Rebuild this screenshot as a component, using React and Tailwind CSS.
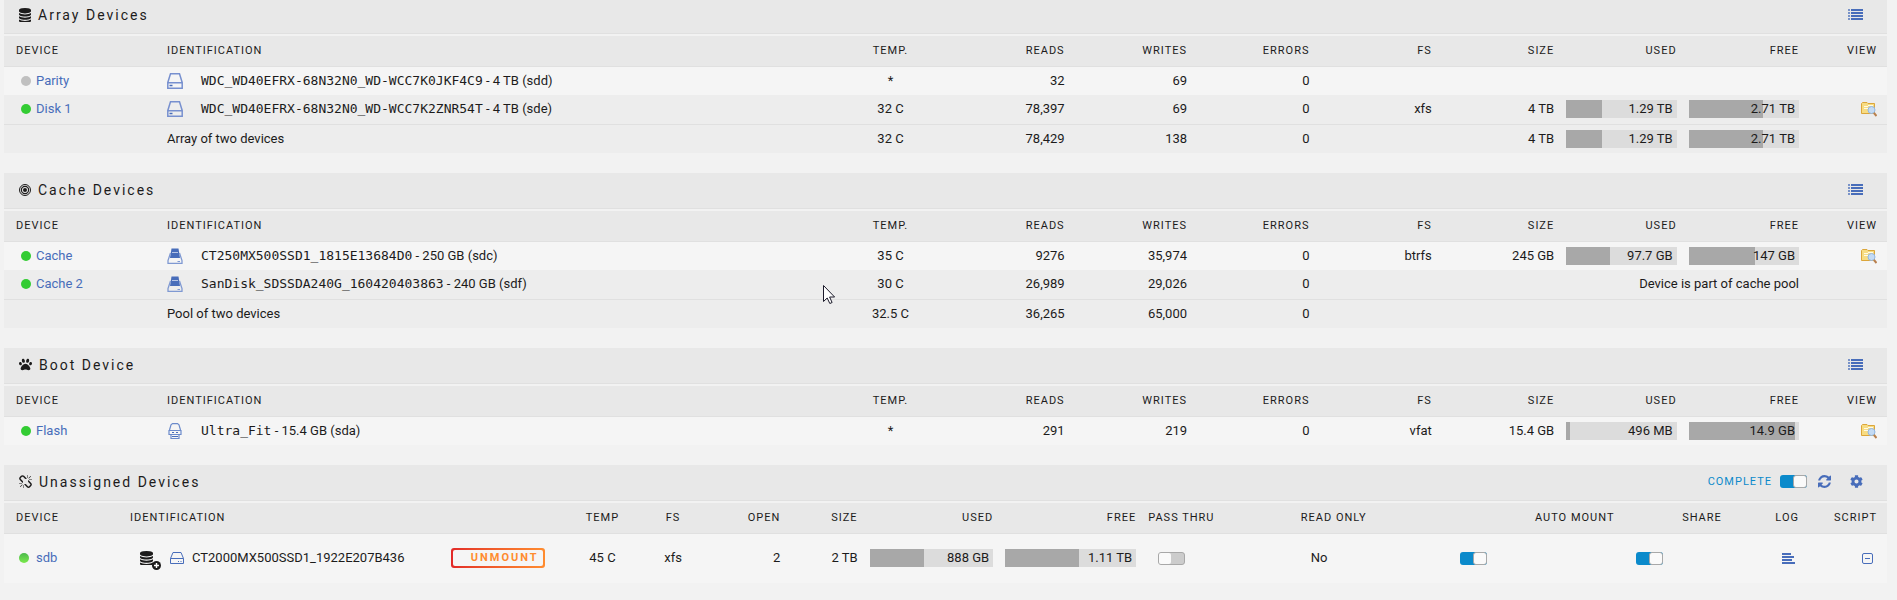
import { FaPaw, FaCog } from "react-icons/fa";

const DATABASE_PATH =
  "M768 768q237 0 443-43t325-127v170q0 69-103 128t-280 93.5-385 34.5-385-34.5-280-93.5-103-128v-170q119 84 325 127t443 43zm0 768q237 0 443-43t325-127v170q0 69-103 128t-280 93.5-385 34.5-385-34.5-280-93.5-103-128v-170q119 84 325 127t443 43zm0-384q237 0 443-43t325-127v170q0 69-103 128t-280 93.5-385 34.5-385-34.5-280-93.5-103-128v-170q119 84 325 127t443 43zm0-1152q208 0 385 34.5t280 93.5 103 128v128q0 69-103 128t-280 93.5-385 34.5-385-34.5-280-93.5-103-128v-128q0-69 103-128t280-93.5 385-34.5z";

const REFRESH_PATH =
  "M1511 928q0 5-1 7-64 268-268 434.5t-478 166.5q-146 0-282.5-55t-243.5-157l-129 129q-19 19-45 19t-45-19-19-45v-448q0-26 19-45t45-19h448q26 0 45 19t19 45-19 45l-137 137q71 66 161 102t187 36q134 0 250-65t186-179q11-17 53-117 8-23 30-23h192q13 0 22.5 9.5t9.5 22.5zm25-800v448q0 26-19 45t-45 19h-448q-26 0-45-19t-19-45 19-45l138-138q-148-137-349-137-134 0-250 65t-186 179q-11 17-53 117-8 23-30 23h-199q-13 0-22.5-9.5t-9.5-22.5v-7q65-268 270-434.5t480-166.5q146 0 284 55.5t245 156.5l130-129q19-19 45-19t45 19 19 45z";

const UNLINK_PATH =
  "M439 1271l-256 256q-11 9-23 9t-23-9q-9-10-9-23t9-23l256-256q10-9 23-9t23 9q9 10 9 23t-9 23zm169 41v320q0 14-9 23t-23 9-23-9-9-23v-320q0-14 9-23t23-9 23 9 9 23zm-224-224q0 14-9 23t-23 9h-320q-14 0-23-9t-9-23 9-23 23-9h320q14 0 23 9t9 23zm1264 128q0 120-85 203l-147 146q-83 83-203 83-121 0-204-85l-334-335q-21-21-42-56l239-18 273 274q28 28 68 28.5t68-27.5l147-146q28-28 28-67 0-40-28-68l-274-275 18-239q35 21 56 42l336 336q84 86 84 204zm-617-724l-239 18-273-274q-28-28-68-28-39 0-68 27l-147 146q-28 28-28 67 0 40 28 68l274 274-18 240q-35-21-56-42l-336-336q-84-86-84-204 0-120 85-203l147-146q83-83 203-83 121 0 204 85l334 335q21 21 42 56zm633 84q0 14-9 23t-23 9h-320q-14 0-23-9t-9-23 9-23 23-9h320q14 0 23 9t9 23zm-544-544v320q0 14-9 23t-23 9-23-9-9-23v-320q0-14 9-23t23-9 23 9 9 23zm407 151l-256 256q-11 9-23 9t-23-9q-9-10-9-23t9-23l256-256q10-9 23-9t23 9q9 10 9 23t-9 23z";

function DatabaseIcon({ className }) {
  return (
    <svg viewBox="0 0 1536 1664" preserveAspectRatio="none" fill="currentColor" className={className}>
      <path d={DATABASE_PATH} />
    </svg>
  );
}

function RefreshIcon() {
  return (
    <svg viewBox="0 0 1536 1536" fill="currentColor" className="size-[13px]">
      <path d={REFRESH_PATH} />
    </svg>
  );
}

function UnlinkIcon() {
  return (
    <svg viewBox="0 0 1664 1664" fill="currentColor" className="size-[13px]">
      <path d={UNLINK_PATH} />
    </svg>
  );
}

function TargetIcon() {
  return (
    <svg viewBox="0 0 12 12" fill="none" stroke="currentColor" className="size-3">
      <circle cx="6" cy="6" r="5.5" />
      <circle cx="6" cy="6" r="3.6" strokeWidth="1.2" />
      <circle cx="6" cy="6" r="2" fill="currentColor" stroke="none" />
    </svg>
  );
}

function ListIcon() {
  return (
    <svg viewBox="0 0 15 12" fill="currentColor" className="h-3 w-[15px]">
      {[0, 3, 6, 9].map((y) => (
        <g key={y}>
          <rect x="0" y={y} width="2" height="2" opacity="0.7" />
          <rect x="3" y={y} width="12" height="2" />
        </g>
      ))}
    </svg>
  );
}

function LogIcon() {
  return (
    <svg viewBox="0 0 13 11" fill="currentColor" className="h-[11px] w-[13px]">
      <rect x="0" y="0" width="9" height="2" />
      <rect x="0" y="3" width="12" height="2" />
      <rect x="0" y="6" width="10" height="2" />
      <rect x="0" y="9" width="13" height="2" />
    </svg>
  );
}

function MinusSquareIcon() {
  return (
    <svg viewBox="0 0 11 11" fill="none" stroke="currentColor" className="size-[11px]">
      <rect x="0.5" y="0.5" width="10" height="10" rx="1.5" />
      <path d="M3 5.5h5" />
    </svg>
  );
}

function DiskIcon() {
  return (
    <svg viewBox="0 0 16 16" fill="none" stroke="#7790cf" strokeWidth="1.5" className="size-4">
      <path d="M.8 9.500 3.500 .8h9L15.200 9.500M.8 9.800h14.400v5.400H.8z" />
      <path d="M2.500 12.500h3" stroke="#486dba" />
    </svg>
  );
}

function SsdIcon() {
  return (
    <svg viewBox="0 0 16 16" fill="none" className="size-4">
      <path d="M4.500 .5h7l1.500 9.500H3z" fill="#486dba" />
      <path d="M3.500 5 1 12.500v2.800h14v-2.800L12.500 5" stroke="#7f99d2" strokeWidth="1.3" />
      <path d="M5 4.500h6" stroke="#b6c5e6" />
      <path d="M10.500 13.500h2.500" stroke="#7f99d2" />
    </svg>
  );
}

function FlashIcon() {
  return (
    <svg viewBox="0 0 16 16" fill="none" stroke="#6b8acb" strokeWidth="1.2" className="size-4">
      <path d="M2.500 7 4 1.800 5.500 .6h5L12 1.800 13.500 7" />
      <path d="M2 7.500h12v4H2zM4 11.500h8v4H4z" />
      <path d="M5 9.500h2M9 9.500h2M5 13.500h6" stroke="#486dba" />
    </svg>
  );
}

function BrowseIcon() {
  return (
    <svg viewBox="0 0 16 16" fill="none" className="size-4">
      <path d="M.5 2.500 1.500 1.500H6L7 2.500h6.500v10H.5z" fill="#f7dc83" stroke="#dca63a" />
      <path d="M3 5.500h4M7 4.500h5M3 7.500h8" stroke="#fffbe6" />
      <circle cx="10.500" cy="9" r="3.500" fill="#c4dbf4" stroke="#93b7e3" />
      <path d="m13 12 2.500 3" stroke="#b9804e" strokeWidth="2" />
    </svg>
  );
}

const DEVICE_ICONS = { disk: DiskIcon, ssd: SsdIcon, flash: FlashIcon };

function Bar({ percent, children }) {
  return (
    <div className="relative h-[18px] bg-[#dcdcdc]">
      <div className="h-full bg-[#a8a8a8]" style={{ width: `${percent}%` }} />
      <span className="absolute inset-y-0 right-1 leading-[18px]">{children}</span>
    </div>
  );
}

function Switch({ label, on }) {
  return (
    <button
      type="button"
      role="switch"
      aria-checked={Boolean(on)}
      aria-label={label}
      className={
        on
          ? "flex h-[13px] w-[27px] justify-end rounded-[3px] bg-[#0b8acb]"
          : "flex h-[13px] w-[27px] rounded-[3px] border border-[#a8a8a8] bg-[#cccccc]"
      }
    >
      <span
        className={
          on
            ? "h-full w-3.5 rounded-[3px] border border-[#a8a8a8] bg-[#fafafa]"
            : "h-full w-3 rounded-[2px] bg-[#fafafa]"
        }
      />
    </button>
  );
}

function TitleBar({ icon, title, children }) {
  return (
    <div className="mb-0.5 flex h-9 items-center border-b border-[#e0e0e0] bg-[#e8e8e8] pr-6 pb-0.5 pl-[15px]">
      <span className="mr-[7px]">{icon}</span>
      <h2 className="grow text-sm tracking-[2px]">{title}</h2>
      <div className="flex items-center text-[#486dba]">{children}</div>
    </div>
  );
}

const HEAD_ROW =
  "h-[30px] border-b border-[#e0e0e0] bg-[#e8e8e8] text-[11px] tracking-[1px] uppercase *:font-normal";

function DeviceTable({ icon, title, rows, summary }) {
  return (
    <section className="mb-5">
      <TitleBar icon={icon} title={title}>
        <button type="button" aria-label={`${title} list`}>
          <ListIcon />
        </button>
      </TitleBar>
      <table className="w-full table-fixed text-right">
        <colgroup>
          <col className="w-[163px]" />
          <col />
          <col className="w-[5.5%]" />
          <col className="w-[6.5%]" />
          <col className="w-[6.5%]" />
          <col className="w-[6.5%]" />
          <col className="w-[6.5%]" />
          <col className="w-[6.5%]" />
          <col className="w-[6.5%]" />
          <col className="w-[6.5%]" />
          <col className="w-22" />
        </colgroup>
        <thead>
          <tr className={HEAD_ROW}>
            <th className="pl-3 text-left">Device</th>
            <th className="text-left">Identification</th>
            <th className="text-center">Temp.</th>
            <th>Reads</th>
            <th>Writes</th>
            <th>Errors</th>
            <th>FS</th>
            <th>Size</th>
            <th>Used</th>
            <th>Free</th>
            <th className="pr-2.5">View</th>
          </tr>
        </thead>
        <tbody>
          {rows.map((row) => {
            const Icon = DEVICE_ICONS[row.type];
            return (
              <tr key={row.name} className="h-[29px] odd:bg-[#f5f5f5] even:bg-[#ededed]">
                <td className="pl-[17px]">
                  <span className="flex items-center gap-[5px]">
                    <span className={row.idle ? "size-2.5 rounded-full bg-[#c0c0c0]" : "size-2.5 rounded-full bg-[#33cc33]"} />
                    <a href="#" className="text-[#486dba]">{row.name}</a>
                  </span>
                </td>
                <td>
                  <span className="flex items-center gap-[18px]">
                    <Icon />
                    <span>
                      <span className="font-['DejaVu_Sans_Mono',monospace]">{row.id}</span>
                      {` - ${row.capacity} (${row.dev})`}
                    </span>
                  </span>
                </td>
                <td className="text-center">{row.temp}</td>
                <td>{row.reads}</td>
                <td>{row.writes}</td>
                <td>0</td>
                {row.note ? (
                  <td colSpan={4}>{row.note}</td>
                ) : (
                  <>
                    <td>{row.fs}</td>
                    <td>{row.size}</td>
                    <td className="pl-3">{row.used && <Bar percent={row.usedPercent}>{row.used}</Bar>}</td>
                    <td className="pl-3">{row.free && <Bar percent={row.freePercent}>{row.free}</Bar>}</td>
                  </>
                )}
                <td className="pr-2.5">
                  {row.fs && (
                    <a href="#" aria-label={`Browse ${row.name}`} className="flex justify-end">
                      <BrowseIcon />
                    </a>
                  )}
                </td>
              </tr>
            );
          })}
        </tbody>
        {summary && (
          <tfoot>
            <tr className="h-[29px] border-t border-[#e0e0e0] bg-[#ededed]">
              <td />
              <td className="text-left">{summary.label}</td>
              <td className="text-center">{summary.temp}</td>
              <td>{summary.reads}</td>
              <td>{summary.writes}</td>
              <td>0</td>
              <td />
              <td>{summary.size}</td>
              <td className="pl-3">{summary.used && <Bar percent={32}>{summary.used}</Bar>}</td>
              <td className="pl-3">{summary.free && <Bar percent={67}>{summary.free}</Bar>}</td>
              <td />
            </tr>
          </tfoot>
        )}
      </table>
    </section>
  );
}

function UnassignedDevices() {
  return (
    <section>
      <TitleBar icon={<UnlinkIcon />} title="Unassigned Devices">
        <span className="mr-2 text-[11px] tracking-[1px] text-[#0b8acb]">COMPLETE</span>
        <Switch label="Complete" on />
        <button type="button" aria-label="Refresh" className="ml-[11px]">
          <RefreshIcon />
        </button>
        <button type="button" aria-label="Settings" className="ml-[19px]">
          <FaCog className="size-[13px]" />
        </button>
      </TitleBar>
      <table className="w-full table-fixed text-right">
        <colgroup>
          <col className="w-[126px]" />
          <col />
          <col className="w-[5.5%]" />
          <col className="w-[2%]" />
          <col className="w-[4.7%]" />
          <col className="w-[4.1%]" />
          <col className="w-[7.2%]" />
          <col className="w-[7.6%]" />
          <col className="w-[8.1%]" />
          <col className="w-[9.1%]" />
          <col className="w-[8.2%]" />
          <col className="w-[5.7%]" />
          <col className="w-[4.1%]" />
          <col className="w-22" />
        </colgroup>
        <thead>
          <tr className={HEAD_ROW}>
            <th className="pl-3 text-left">Device</th>
            <th className="text-left">Identification</th>
            <th className="text-center">Temp</th>
            <th className="text-center">FS</th>
            <th>Open</th>
            <th>Size</th>
            <th>Used</th>
            <th>Free</th>
            <th className="pl-3 text-left">Pass Thru</th>
            <th className="pl-3 text-left">Read Only</th>
            <th>Auto Mount</th>
            <th>Share</th>
            <th>Log</th>
            <th className="pr-2.5">Script</th>
          </tr>
        </thead>
        <tbody>
          <tr className="h-[50px] bg-[#f5f5f5]">
            <td className="pl-[15px]">
              <span className="flex items-center gap-[7px]">
                <span className="size-2.5 rounded-full bg-linear-to-b from-[#4bb94b] to-[#7bea4c]" />
                <a href="#" className="text-[#486dba]">sdb</a>
              </span>
            </td>
            <td className="pr-1.5 pl-2.5">
              <span className="flex items-center">
                <span className="relative mr-[17px]">
                  <DatabaseIcon className="h-3.5 w-[13px]" />
                  <svg viewBox="0 0 10 10" className="absolute top-2.5 left-3 size-[9px]">
                    <circle cx="5" cy="5" r="5" fill="#1c1b1b" />
                    <path d="M5 2.200v5.600M2.200 5h5.600" stroke="#fff" strokeWidth="1.600" />
                  </svg>
                </span>
                <svg viewBox="0 0 14 12" fill="none" stroke="#486dba" className="mr-2 h-3 w-3.5">
                  <path d="M.5 6.500 3 .5h8l2.500 6v5H.5zM.5 6.500h13M8 9.500h1M10.500 9.500h1" />
                </svg>
                CT2000MX500SSD1_1922E207B436
                <button
                  type="button"
                  className="ml-auto h-5 w-[94px] rounded-[3px] bg-linear-to-r from-[#e22828] to-[#ff8c2f] p-0.5 text-[11px] font-bold tracking-[2px] text-[#ff8c2f]"
                >
                  <span className="block h-4 rounded-[2px] bg-[#f5f5f5] pr-1 text-right leading-4">UNMOUNT</span>
                </button>
              </span>
            </td>
            <td className="text-center">45 C</td>
            <td className="text-center">xfs</td>
            <td>2</td>
            <td>2 TB</td>
            <td className="pl-3"><Bar percent={44}>888 GB</Bar></td>
            <td className="pl-3"><Bar percent={56}>1.11 TB</Bar></td>
            <td className="pl-[22px]"><Switch label="Pass thru" /></td>
            <td className="pl-[22px] text-left">No</td>
            <td><Switch label="Auto mount" on /></td>
            <td className="pl-[22px]"><Switch label="Share" on /></td>
            <td className="pr-1">
              <a href="#" aria-label="Log" className="flex justify-end text-[#486dba]">
                <LogIcon />
              </a>
            </td>
            <td className="pr-3.5">
              <a href="#" aria-label="Script" className="flex justify-end text-[#486dba]">
                <MinusSquareIcon />
              </a>
            </td>
          </tr>
        </tbody>
      </table>
    </section>
  );
}

const arrayRows = [
  { name: "Parity", type: "disk", idle: true, id: "WDC_WD40EFRX-68N32N0_WD-WCC7K0JKF4C9", capacity: "4 TB", dev: "sdd", temp: "*", reads: "32", writes: "69" },
  { name: "Disk 1", type: "disk", id: "WDC_WD40EFRX-68N32N0_WD-WCC7K2ZNR54T", capacity: "4 TB", dev: "sde", temp: "32 C", reads: "78,397", writes: "69", fs: "xfs", size: "4 TB", used: "1.29 TB", usedPercent: 32, free: "2.71 TB", freePercent: 67 },
];

const cacheRows = [
  { name: "Cache", type: "ssd", id: "CT250MX500SSD1_1815E13684D0", capacity: "250 GB", dev: "sdc", temp: "35 C", reads: "9276", writes: "35,974", fs: "btrfs", size: "245 GB", used: "97.7 GB", usedPercent: 40, free: "147 GB", freePercent: 60 },
  { name: "Cache 2", type: "ssd", id: "SanDisk_SDSSDA240G_160420403863", capacity: "240 GB", dev: "sdf", temp: "30 C", reads: "26,989", writes: "29,026", note: "Device is part of cache pool" },
];

const bootRows = [
  { name: "Flash", type: "flash", id: "Ultra_Fit", capacity: "15.4 GB", dev: "sda", temp: "*", reads: "291", writes: "219", fs: "vfat", size: "15.4 GB", used: "496 MB", usedPercent: 3, free: "14.9 GB", freePercent: 96 },
];

export default function App() {
  return (
    <div className="flow-root min-h-screen overflow-hidden bg-[#f2f2f2]">
      <main className="relative -mt-0.5 pr-2.5 pl-1 font-[Roboto,sans-serif] text-[13px] leading-[18px] text-[#1c1b1b]">
        <DeviceTable
          icon={<DatabaseIcon className="h-3.5 w-3" />}
          title="Array Devices"
          rows={arrayRows}
          summary={{ label: "Array of two devices", temp: "32 C", reads: "78,429", writes: "138", size: "4 TB", used: "1.29 TB", free: "2.71 TB" }}
        />
        <DeviceTable
          icon={<TargetIcon />}
          title="Cache Devices"
          rows={cacheRows}
          summary={{ label: "Pool of two devices", temp: "32.5 C", reads: "36,265", writes: "65,000" }}
        />
        <DeviceTable icon={<FaPaw className="size-[13px]" />} title="Boot Device" rows={bootRows} />
        <UnassignedDevices />

        {/* Mouse pointer */}
        <svg viewBox="0 0 12 19" className="absolute top-[287px] left-[823px] h-[19px] w-3" aria-hidden="true">
          <path d="M.5.5v16l3.700-3.500 2.600 5.500 2.300-1-2.500-5.500h5z" fill="#fff" stroke="#1c1b2b" />
        </svg>
      </main>
    </div>
  );
}
